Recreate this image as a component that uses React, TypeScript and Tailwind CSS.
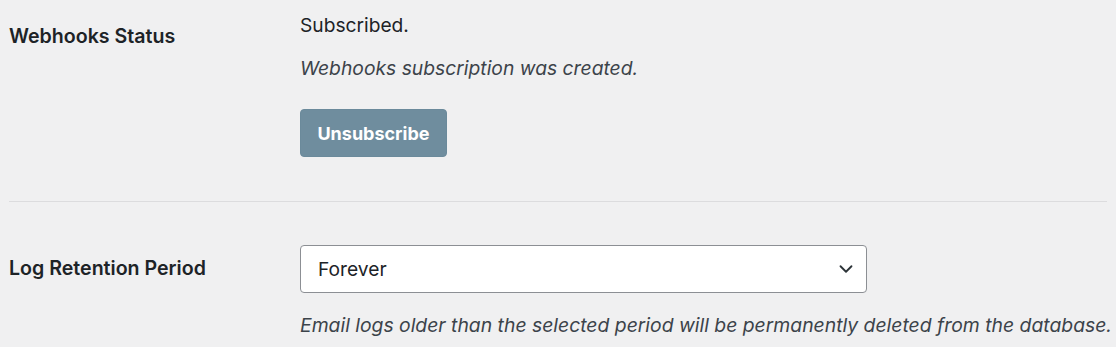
import { ChevronDown } from "lucide-react";

const font = { fontFamily: "Inter, 'Liberation Sans', sans-serif" };

export default function App() {
  return (
    <div className="min-h-[347px] w-full bg-[#f0f0f1] text-[#1d2327] px-[9px]" style={font}>
      <div className="flex border-b border-[#dcdcde] pb-[44px]">
        <div className="w-[291px] shrink-0 pt-[23px] text-[19.6px] leading-[26px] font-semibold">
          Webhooks Status
        </div>
        <div className="flex flex-col pt-[12px]">
          <p className="text-[19.2px] leading-[26px]">Subscribed.</p>
          <p className="mt-[17px] text-[19.3px] leading-[26px] italic text-[#3c434a]">
            Webhooks subscription was created.
          </p>
          <button className="mt-[28px] h-[48px] w-[147px] rounded-[4px] border border-[#6b8a9b] bg-[#6f8d9e] text-[18px] font-bold text-white">
            Unsubscribe
          </button>
        </div>
      </div>
      <div className="flex pt-[43px]">
        <div className="w-[291px] shrink-0 flex items-center h-[48px] text-[19.6px] font-semibold">
          Log Retention Period
        </div>
        <div className="flex flex-col">
          <div className="flex h-[48px] w-[567px] items-center justify-between rounded-[4px] border border-[#8c8f94] bg-white pl-[17px] pr-[9px]">
            <span className="text-[19.2px]">Forever</span>
            <ChevronDown className="size-[22px] text-[#2c3338]" strokeWidth={2} />
          </div>
          <p className="mt-[19px] text-[19.35px] leading-[26px] italic text-[#3c434a] whitespace-nowrap">
            Email logs older than the selected period will be permanently deleted from the database.
          </p>
        </div>
      </div>
    </div>
  );
}
